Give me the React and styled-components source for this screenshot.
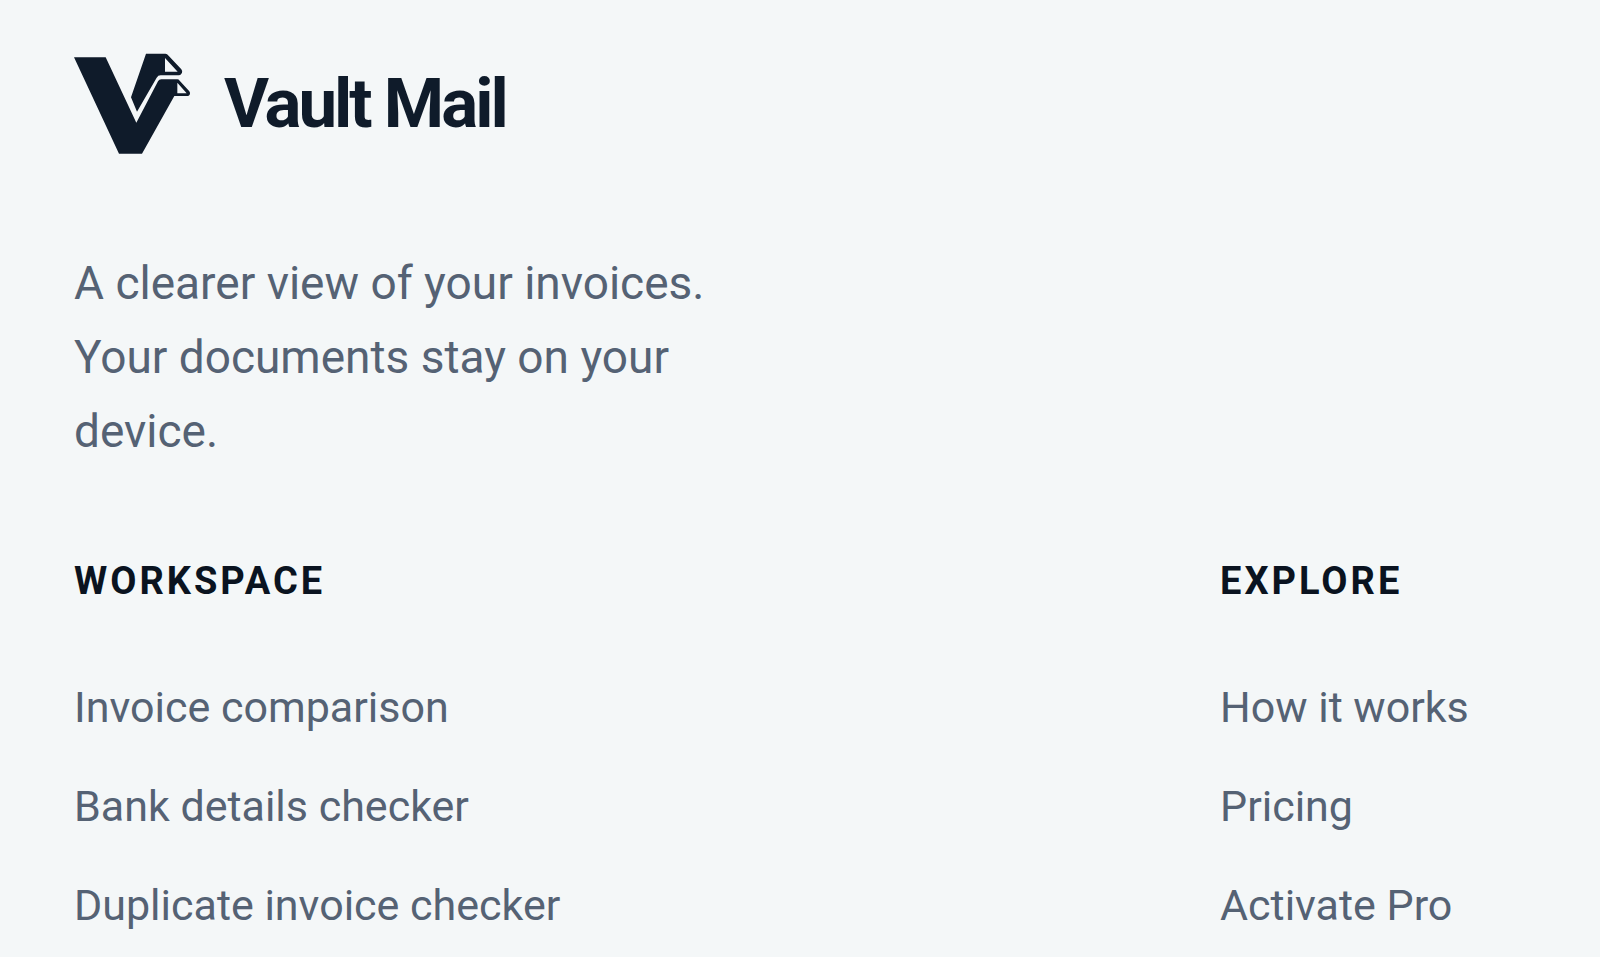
import React from 'react';
import styled, { createGlobalStyle } from 'styled-components';

const GlobalStyle = createGlobalStyle`
  body {
    margin: 0;
    background-color: #f4f7f8;
    font-family: Roboto, 'Liberation Sans', sans-serif;
    color: #0f1b2a;
  }
`;

const FooterBlock = styled.footer`
  padding: 52px 74px 16px;
`;

const Brand = styled.a`
  display: flex;
  align-items: center;
  gap: 32px;
  color: inherit;
  text-decoration: none;
  .mark {
    width: 118px;
    height: 104px;
  }
  .name {
    font-size: 69px;
    line-height: 80px;
    font-weight: 700;
    letter-spacing: -3px;
  }
`;

const Tagline = styled.p`
  max-width: 660px;
  margin: 90px 0 0;
  font-size: 46px;
  line-height: 74px;
  color: #556274;
`;

const Columns = styled.div`
  display: grid;
  grid-template-columns: 1fr 306px;
  margin-top: 83px;
`;

const Heading = styled.h2`
  margin: 0;
  font-size: 38px;
  line-height: 60px;
  font-weight: 700;
  letter-spacing: 3px;
  text-transform: uppercase;
  color: #0a1320;
`;

const LinkList = styled.ul`
  list-style: none;
  margin: 66px 0 0;
  padding: 0;
  display: flex;
  flex-direction: column;
  gap: 39px;
  a {
    display: block;
    font-size: 43px;
    line-height: 60px;
    color: #556274;
    text-decoration: none;
    white-space: nowrap;
  }
`;

const sections = [
  {
    title: 'Workspace',
    links: ['Invoice comparison', 'Bank details checker', 'Duplicate invoice checker'],
  },
  {
    title: 'Explore',
    links: ['How it works', 'Pricing', 'Activate Pro'],
  },
];

const Logo = () => (
  <svg className="mark" viewBox="42 36 354 312" aria-hidden="true">
    {/* front wing with its folded tip */}
    <path
      fill="currentColor"
      fillRule="evenodd"
      d="M42 52H137L229 248L294 124Q297 118 304 118H352Q356 118 359 122L388 154Q392 159 389 164Q387 168 382 168H343L246 341H177ZM352 128V160H380Z"
    />
    {/* back wing */}
    <path
      fill="currentColor"
      fillRule="evenodd"
      d="M258 41H316Q320 41 323 44L364 88Q368 93 366 98L363 103Q361 106 356 106H302Q294 106 290 113L231 215L213 172ZM315 54V95H353Z"
    />
  </svg>
);

const LinkSection = ({ title, links }) => (
  <nav aria-label={title}>
    <Heading>{title}</Heading>
    <LinkList>
      {links.map((link) => (
        <li key={link}>
          <a href="/">{link}</a>
        </li>
      ))}
    </LinkList>
  </nav>
);

const App = () => (
  <>
    <GlobalStyle />
    <FooterBlock>
      <Brand href="/">
        <Logo />
        <span className="name">Vault Mail</span>
      </Brand>
      <Tagline>A clearer view of your invoices. Your documents stay on your device.</Tagline>
      <Columns>
        {sections.map(({ title, links }) => (
          <LinkSection key={title} title={title} links={links} />
        ))}
      </Columns>
    </FooterBlock>
  </>
);

export default App;
